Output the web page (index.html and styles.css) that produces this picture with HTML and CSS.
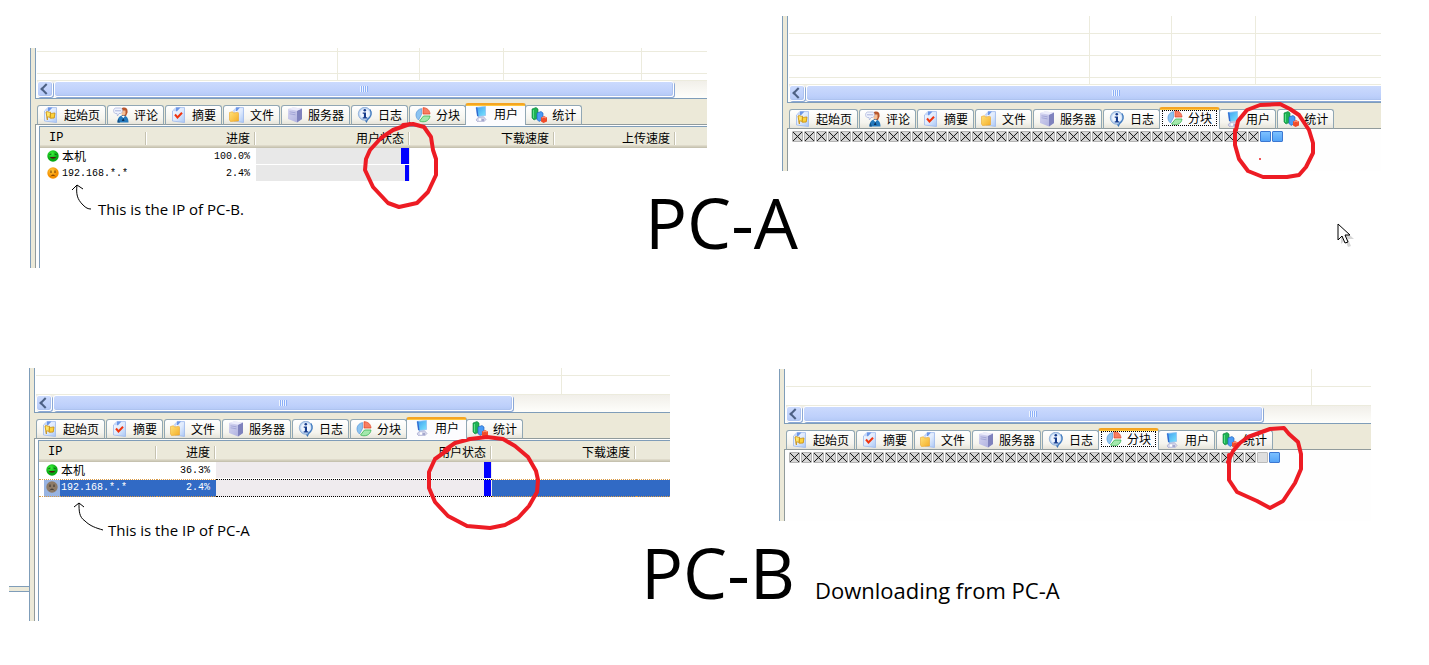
FILE: index.html
```html
<!DOCTYPE html>
<html lang="zh-CN">
<head>
<meta charset="utf-8">
<title>PC-A / PC-B</title>
<link rel="stylesheet" href="styles.css">
</head>
<body>
<svg class="sprite" aria-hidden="true">
  <defs>
    <linearGradient id="gPage" x1="0" y1="0" x2="1" y2="1"><stop offset="0" stop-color="#f4f8ff"/><stop offset=".5" stop-color="#e0ebfd"/><stop offset="1" stop-color="#a9c6f5"/></linearGradient>
    <linearGradient id="gGold" x1="0" y1="0" x2="1" y2="1"><stop offset="0" stop-color="#ffe27a"/><stop offset="1" stop-color="#f5ae28"/></linearGradient>
    <linearGradient id="gScreen" x1="0" y1="0" x2="1" y2="1"><stop offset="0" stop-color="#3d9cf0"/><stop offset="1" stop-color="#7be6fc"/></linearGradient>
    <linearGradient id="gServer" x1="0" y1="0" x2="1" y2="1"><stop offset="0" stop-color="#d8d8f2"/><stop offset="1" stop-color="#a9abdc"/></linearGradient>
    <radialGradient id="gInfo"><stop offset="0" stop-color="#fff"/><stop offset=".65" stop-color="#e9f2ff"/><stop offset="1" stop-color="#9fbfe6"/></radialGradient>
    <radialGradient id="gGreen" cx=".4" cy=".3"><stop offset="0" stop-color="#3cf53c"/><stop offset="1" stop-color="#06a811"/></radialGradient>
    <radialGradient id="gOrange" cx=".4" cy=".3"><stop offset="0" stop-color="#ffc93c"/><stop offset="1" stop-color="#f59000"/></radialGradient>
  </defs>
  <symbol id="page" viewBox="0 0 16 16"><path d="M5 .6h8.500v14.900L1.500 14V4z" fill="url(#gPage)" stroke="#9db9ec" stroke-width=".8"/><path d="M1.500 4L5 .6v3.600z" fill="#c3d5f8"/><path d="M5 .6h4.500L6 4.200H5z" fill="#6d96e6"/></symbol>
  <symbol id="start" viewBox="0 0 16 16"><use href="#page"/><path d="M3 5c2-1.200 2.800 1 4.500.2l-.3 5c-1.400.6-1.800-.9-3-.2l.2 3z" fill="#ffe668" stroke="#c99114" stroke-width=".9"/><path d="M7.500 6.200c1.500.6 2.500-.3 4.500-.1l-.8 4.900c-1.600-.2-2.200.4-4 .2z" fill="#fcd23a" stroke="#c99114" stroke-width=".9"/></symbol>
  <symbol id="comment" viewBox="0 0 16 16"><path d="M9 1c4-1.500 6 1 5.500 4.500L13 9H9z" fill="#b8562c"/><path d="M8.500 3.500h4V7l-2 2-2-1.500z" fill="#f5bf95"/><path d="M4.500 15.500c0-4.500 2-7 5.500-7s5.500 2.500 5.500 7z" fill="#2379bd"/><path d="M4.500 15.500c0-1.500.2-2.800.8-4l1.700 4z" fill="#124f86"/><path d="M8.500 9l1.800 2L12 9z" fill="#fff"/><path d="M10.200 11l-1.400 3h2.800z" fill="#0c2f58"/><path d="M2.500 1h5c2.500 0 2.500 5 0 5.500H6L4.500 9 4 6.500H2.500C0 6 0 1.500 2.500 1z" fill="#f0f3fd" stroke="#a3afd8" stroke-width=".7"/><path d="M2.500 3.800h5" stroke="#5e72bd" stroke-dasharray="1 1"/></symbol>
  <symbol id="summary" viewBox="0 0 16 16"><use href="#page"/><path d="M4 7.500l2.500 3 4.500-4.700" fill="none" stroke="#f0340e" stroke-width="2"/></symbol>
  <symbol id="file" viewBox="0 0 16 16"><path d="M7 .6h7.500v14.900L5 14V4z" fill="url(#gPage)" stroke="#9db9ec" stroke-width=".8"/><path d="M3.500 4L7 .6V4z" fill="#c3d5f8"/><path d="M7 .6h4L8 4H7z" fill="#6d96e6"/><path d="M.5 5.500l3-.8 1 1.300 4-.6c.8 0 1 .3 1 1V14L1.500 14.500l-1-1.500z" fill="url(#gGold)" stroke="#eba52a" stroke-width=".6"/></symbol>
  <symbol id="server" viewBox="0 0 16 16"><path d="M1 2l5-1.500 9 1V12l-5 3.500L1 12z" fill="url(#gServer)"/><path d="M10 3.700l5-2.200V12l-5 3.500z" fill="#7f82bd"/><path d="M1 2l5-1.500 9 1-5 2.200z" fill="#ececfb"/><path d="M2.500 4.800l6 1M2.500 6.800l6 1" stroke="#9b9dd2" stroke-width=".8"/></symbol>
  <symbol id="log" viewBox="0 0 16 16"><path d="M7 12l2.500 4 2.500-5z" fill="#3570b5"/><circle cx="7.800" cy="6.800" r="6.500" fill="url(#gInfo)" stroke="#8aabd6" stroke-width=".8"/><path d="M13 2.500c2.300 3.500 1 7.500-3 10.300" fill="none" stroke="#3d78bd" stroke-width="1.300"/><circle cx="7.800" cy="3.300" r="1.300" fill="#153b8c"/><path d="M5.700 5.500H9v4.700h1.200v1.200H5.700v-1.200h1.200V6.700H5.700z" fill="#153b8c"/></symbol>
  <symbol id="blocks" viewBox="0 0 16 16"><path d="M6.500 1.500v6l-3 5.500C-.5 10 0 3 6.500 1.500z" fill="#8cc3f0" stroke="#4a8fd6" stroke-width=".6"/><path d="M8 .7c4 0 6.700 2.300 7 6.300L8 7z" fill="#f77d63" stroke="#e0411f" stroke-width=".7"/><path d="M8.500 9H15c-.5 5-6 7-10.500 5z" fill="#a3e8ac" stroke="#3bb457" stroke-width=".8"/></symbol>
  <symbol id="user" viewBox="0 0 16 16"><path d="M3 1.500L12.500 .5v9L5 10.500z" fill="url(#gScreen)" stroke="#8fc0f2" stroke-width=".8"/><path d="M3 1.500l1.300-.2L5.500 10.500 4 10z" fill="#2f69cf"/><path d="M5 11.500l5.500-.8 2.500 2.800L10.500 16H5l-2-2z" fill="#d3d5ea" stroke="#9a9dc8" stroke-width=".6"/><circle cx="7" cy="13.500" r="1.200" fill="#fff"/><path d="M8.500 14h2.500" stroke="#777bb0"/></symbol>
  <symbol id="stats" viewBox="0 0 16 16"><path d="M1 2l4-1.500L7 2v9l-4 2-2-2z" fill="#1fb255" stroke="#0b8238" stroke-width=".6"/><path d="M2.500 3v8" stroke="#5ce08a"/><path d="M6 6l4-1.500L12 6v6l-4 2.500-2-2z" fill="#4a9bf5" stroke="#1559b8" stroke-width=".6"/><path d="M10 10.500l3-1.500 3 1.500v4L12.500 16 10 14.500z" fill="#f04c2a"/><path d="M11 11l2-1 2 1" stroke="#ff9c84" fill="none"/></symbol>
  <symbol id="happy" viewBox="0 0 12 12"><circle cx="6" cy="6" r="5.700" fill="url(#gGreen)"/><path d="M2.500 4.500l2-.5M7.500 4l2 .5" stroke="#0b5a0e"/><path d="M3 7h6c-.5 2.300-5.500 2.300-6 0z" fill="#4b1a10"/></symbol>
  <symbol id="sad" viewBox="0 0 12 12"><circle cx="6" cy="6" r="5.700" fill="url(#gOrange)"/><path d="M4 3.500v2.500M8 3.500v2.500M4 9.300c.8-1.600 3.200-1.600 4 0" stroke="#6a3400" fill="none"/></symbol>
  <symbol id="dim" viewBox="0 0 12 12"><circle cx="6" cy="6" r="5.700" fill="#8d7b67"/><path d="M4 3.500v2.500M8 3.500v2.500M4 9.300c.8-1.600 3.200-1.600 4 0" stroke="#33302c" fill="none"/></symbol>
</svg>

<main class="board">
  <section class="scene scene-a">
    <div class="window users-window">
      <div class="sash"></div>
      <div class="content">
        <div class="upper">
          <div class="lines from-3 tall-33"><i class="w-301"></i><i class="w-82"></i><i class="w-84"></i><i class="w-138"></i></div>
          <div class="scroll"><button class="arrow" type="button" aria-label="向左滚动"></button><div class="thumb thumb-a"><i class="grip"></i></div></div>
        </div>
        <nav class="tabs">
          <button type="button"><svg><use href="#start"/></svg>起始页</button>
          <button type="button"><svg><use href="#comment"/></svg>评论</button>
          <button type="button"><svg><use href="#summary"/></svg>摘要</button>
          <button type="button"><svg><use href="#file"/></svg>文件</button>
          <button type="button"><svg><use href="#server"/></svg>服务器</button>
          <button type="button"><svg><use href="#log"/></svg>日志</button>
          <button type="button"><svg><use href="#blocks"/></svg>分块</button>
          <button type="button" class="active"><svg><use href="#user"/></svg>用户</button>
          <button type="button"><svg><use href="#stats"/></svg>统计</button>
        </nav>
        <div class="lower lower-a">
          <div class="inset">
            <table class="peers">
              <colgroup><col class="w-107"><col class="w-109"><col class="w-154"><col class="w-145"><col class="w-121"><col></colgroup>
              <thead><tr><th class="first">IP</th><th>进度</th><th>用户状态</th><th>下载速度</th><th>上传速度</th><th class="rest"></th></tr></thead>
              <tbody>
                <tr><td class="peer"><svg><use href="#happy"/></svg>本机</td><td class="num">100.0%</td><td class="bar"><i class="chunk chunk-8"></i></td><td></td><td></td><td></td></tr>
                <tr><td class="peer ip"><svg><use href="#sad"/></svg>192.168.*.*</td><td class="num">2.4%</td><td class="bar"><i class="chunk chunk-4"></i></td><td></td><td></td><td></td></tr>
              </tbody>
            </table>
            <p class="note"><svg class="pointer" width="22" height="30" viewBox="0 0 22 30"><path d="M1 7l5-5 6 4M6 2c-1 9 0 14 6 20 3 3 5 4 8 4"/></svg>This is the IP of PC-B.</p>
          </div>
        </div>
      </div>
      <svg class="ring ring-a1" width="90" height="100" viewBox="355 115 90 100"><path d="M403 125L413 124 424 127 431 137 433 150 436 159V175L428 192 417 203 399 207 388 203 373 187 365 170 366 159 370 150 381 138 393 130 410 124"/></svg>
    </div>

    <div class="window pieces-window">
      <div class="sash"></div>
      <div class="content">
        <div class="upper">
          <div class="lines from-17 tall-69"><i class="w-301"></i><i class="w-82"></i><i class="w-84"></i></div>
          <div class="scroll"><button class="arrow" type="button" aria-label="向左滚动"></button><div class="thumb thumb-open"><i class="grip"></i></div></div>
        </div>
        <nav class="tabs">
          <button type="button"><svg><use href="#start"/></svg>起始页</button>
          <button type="button"><svg><use href="#comment"/></svg>评论</button>
          <button type="button"><svg><use href="#summary"/></svg>摘要</button>
          <button type="button"><svg><use href="#file"/></svg>文件</button>
          <button type="button"><svg><use href="#server"/></svg>服务器</button>
          <button type="button"><svg><use href="#log"/></svg>日志</button>
          <button type="button" class="active focused"><svg><use href="#blocks"/></svg>分块</button>
          <button type="button"><svg><use href="#user"/></svg>用户</button>
          <button type="button"><svg><use href="#stats"/></svg>统计</button>
        </nav>
        <div class="lower pieces pieces-a">
          <i></i><i></i><i></i><i></i><i></i><i></i><i></i><i></i><i></i><i></i><i></i><i></i><i></i><i></i><i></i><i></i><i></i><i></i><i></i><i></i><i></i><i></i><i></i><i></i><i></i><i></i><i></i><i></i><i></i><i></i><i></i><i></i><i></i><i></i><i></i><i></i><i></i><i></i><i></i><i class="busy"></i><i class="busy"></i>
        </div>
      </div>
      <svg class="ring ring-a2" width="100" height="90" viewBox="1225 95 100 90"><path d="M1236 130L1238 121 1247 110 1260 105 1280 104 1290 109 1299 115 1309 130 1313 143V153L1306 167 1299 175 1287 177H1263L1248 171 1239 159 1235 145V130"/><circle class="speck" cx="1260" cy="159" r="1"/></svg>
    </div>

    <h1 class="title">PC-A</h1>
    <svg class="cursor" width="20" height="26" viewBox="0 0 20 26"><path class="shade" d="M4 4v17l4-4 3 7 3-1-3-7h6z"/><path class="face" d="M1 1v16l4-4 3 7 3-1-3-7h5z"/></svg>
  </section>

  <section class="scene scene-b">
    <div class="window users-window">
      <div class="stub"><i></i></div>
      <div class="sash"></div>
      <div class="content">
        <div class="upper">
          <div class="lines from-7 tall-27"><i class="w-526"></i></div>
          <div class="scroll"><button class="arrow" type="button" aria-label="向左滚动"></button><div class="thumb thumb-b"><i class="grip"></i></div></div>
        </div>
        <nav class="tabs">
          <button type="button"><svg><use href="#start"/></svg>起始页</button>
          <button type="button"><svg><use href="#summary"/></svg>摘要</button>
          <button type="button"><svg><use href="#file"/></svg>文件</button>
          <button type="button"><svg><use href="#server"/></svg>服务器</button>
          <button type="button"><svg><use href="#log"/></svg>日志</button>
          <button type="button"><svg><use href="#blocks"/></svg>分块</button>
          <button type="button" class="active"><svg><use href="#user"/></svg>用户</button>
          <button type="button"><svg><use href="#stats"/></svg>统计</button>
        </nav>
        <div class="lower lower-b">
          <div class="inset">
            <table class="peers">
              <colgroup><col class="w-118"><col class="w-59"><col class="w-276"><col class="w-144"><col></colgroup>
              <thead><tr><th class="first">IP</th><th>进度</th><th>用户状态</th><th>下载速度</th><th class="rest"></th></tr></thead>
              <tbody>
                <tr><td class="peer"><svg><use href="#happy"/></svg>本机</td><td class="num">36.3%</td><td class="bar warm"><i class="chunk chunk-7"></i></td><td></td><td></td></tr>
                <tr class="selected"><td class="peer ip"><svg><use href="#dim"/></svg>192.168.*.*</td><td class="num">2.4%</td><td class="bar warm"><i class="chunk chunk-7"></i></td><td></td><td></td></tr>
              </tbody>
            </table>
            <p class="note note-b"><svg class="pointer" width="32" height="34" viewBox="0 0 32 34"><path d="M1 7l5-4 5 4M6 3c0 8 0 14 6 18 5 5 11 7 18 9"/></svg>This is the IP of PC-A</p>
          </div>
        </div>
      </div>
      <svg class="ring ring-b1" width="124" height="104" viewBox="422 432 124 104"><path d="M445 450L455 443 470 439 487 437 503 439 515 446 528 457 536 471 538 480 537 492 529 506 518 518 505 525 490 528 467 526 448 516 435 502 429 488V472L435 459 449 449"/></svg>
    </div>

    <div class="window pieces-window">
      <div class="sash"></div>
      <div class="content">
        <div class="upper">
          <div class="lines from-17 tall-37"><i class="w-526"></i></div>
          <div class="scroll"><button class="arrow" type="button" aria-label="向左滚动"></button><div class="thumb thumb-b"><i class="grip"></i></div></div>
        </div>
        <nav class="tabs">
          <button type="button"><svg><use href="#start"/></svg>起始页</button>
          <button type="button"><svg><use href="#summary"/></svg>摘要</button>
          <button type="button"><svg><use href="#file"/></svg>文件</button>
          <button type="button"><svg><use href="#server"/></svg>服务器</button>
          <button type="button"><svg><use href="#log"/></svg>日志</button>
          <button type="button" class="active focused"><svg><use href="#blocks"/></svg>分块</button>
          <button type="button"><svg><use href="#user"/></svg>用户</button>
          <button type="button"><svg><use href="#stats"/></svg>统计</button>
        </nav>
        <div class="lower pieces pieces-b">
          <i></i><i></i><i></i><i></i><i></i><i></i><i></i><i></i><i></i><i></i><i></i><i></i><i></i><i></i><i></i><i></i><i></i><i></i><i></i><i></i><i></i><i></i><i></i><i></i><i></i><i></i><i></i><i></i><i></i><i></i><i></i><i></i><i></i><i></i><i></i><i></i><i></i><i></i><i></i><i class="empty"></i><i class="busy"></i>
        </div>
      </div>
      <svg class="ring ring-b2" width="90" height="96" viewBox="1220 420 90 96"><path d="M1228 462L1233 451 1240 443 1248 437 1270 429 1284 428 1289 434 1298 442 1301 454V469L1295 483 1283 501 1270 508 1257 501 1237 492 1229 480V455"/></svg>
    </div>

    <h1 class="title">PC-B <small>Downloading from PC-A</small></h1>
  </section>
</main>
</body>
</html>
```

FILE: styles.css
```css
:root {
  --blue: #7f9db9;
  --beige: #ece9d8;
  --rule: #ecebdd;
  --tab-line: #919b9c;
}

* { box-sizing: border-box; }

body {
  margin: 0;
  background: #fff;
  color: #000;
  font: 12px/16px "Noto Sans CJK SC", sans-serif;
}

.sprite { position: absolute; width: 0; height: 0; }

.board { padding: 16px 0; }

.scene {
  position: relative;
  display: grid;
  align-items: start;
}
.scene-a { grid-template-columns: 30px minmax(0, 677fr) 75px minmax(0, 599fr) 48px; }
.scene-b {
  grid-template-columns: 9px minmax(0, 661fr) 109px minmax(0, 592fr) 58px;
  margin-top: 100px;
}

.window { position: relative; display: flex; grid-row: 1; }
.users-window { grid-column: 2; }
.pieces-window { grid-column: 4; }
.scene-a .users-window { margin-top: 32px; }
.scene-b .pieces-window { margin-top: 1px; }

.sash { flex: none; width: 5px; border-left: 1px solid var(--blue); background: var(--beige); }
.stub { flex: none; width: 20px; padding-top: 218px; }
.stub i {
  display: block;
  height: 6px;
  border: solid var(--blue);
  border-width: 1px 0;
  background: var(--beige);
}
.content { flex: 1; min-width: 0; }

/* list area above the tabs */
.upper { border: solid var(--blue); border-width: 0 0 1px 1px; padding-left: 1px; }
.lines {
  display: flex;
  border-bottom: 1px solid var(--rule);
  background: linear-gradient(var(--rule) 1px, transparent 1px) 0 0 / 100% 22px;
}
.lines i { flex: none; border-right: 1px solid var(--rule); }
.from-3 { background-position-y: 3px; }
.from-7 { background-position-y: 7px; }
.from-17 { background-position-y: 17px; }
.tall-27 { height: 27px; }
.tall-33 { height: 33px; }
.tall-37 { height: 37px; }
.tall-69 { height: 69px; }

.w-59 { width: 59px; }
.w-82 { width: 82px; }
.w-84 { width: 84px; }
.w-107 { width: 107px; }
.w-109 { width: 109px; }
.w-118 { width: 118px; }
.w-121 { width: 121px; }
.w-138 { width: 138px; }
.w-144 { width: 144px; }
.w-145 { width: 145px; }
.w-154 { width: 154px; }
.w-276 { width: 276px; }
.w-301 { width: 301px; }
.w-526 { width: 526px; }

.scroll {
  display: flex;
  gap: 1px;
  height: 17px;
  padding-bottom: 1px;
  background: linear-gradient(#f1efe9, #fefefb);
}
.arrow, .thumb {
  border: 1px solid #fff;
  border-radius: 3px;
  background: linear-gradient(#cbdafd, #bed0fb 70%, #b3c9f6);
  box-shadow: inset -1px -1px #aec3f0, 1px 1px #8ba8d6;
}
.arrow { display: grid; place-items: center; flex: none; width: 16px; padding: 0; }
.arrow::before {
  content: "";
  width: 6px;
  height: 6px;
  margin-left: 2px;
  border: solid #4d6185;
  border-width: 0 0 2px 2px;
  transform: rotate(45deg);
}
.thumb { display: grid; place-items: center; }
.thumb-a { width: 620px; }
.thumb-b { width: 460px; }
.thumb-open { flex: 1; border-right: 0; border-radius: 3px 0 0 3px; padding-left: 43px; box-shadow: inset 0 -1px #aec3f0, 0 1px #8ba8d6; }
.grip { width: 8px; height: 6px; background: repeating-linear-gradient(90deg, #eef4fe 0 1px, #8cb0f8 1px 2px); }

/* tab strip */
.tabs {
  display: flex;
  align-items: flex-end;
  gap: 1px;
  height: 26px;
  padding-left: 2px;
  background: linear-gradient(var(--tab-line), var(--tab-line)) 0 100% / 100% 1px no-repeat var(--beige);
}
.tabs button {
  display: flex;
  align-items: center;
  gap: 5px;
  flex: none;
  height: 20px;
  padding: 0 5px;
  border: 1px solid #91a7b4;
  border-bottom-color: var(--tab-line);
  border-radius: 3px 3px 0 0;
  background: linear-gradient(#fff, #f5f4ee 70%, #e6e4da);
  color: inherit;
  font: inherit;
  white-space: nowrap;
}
.tabs svg { width: 16px; height: 16px; }
.tabs .active {
  z-index: 1;
  height: 22px;
  margin: 0 -2px;
  padding: 0 7px 3px;
  border-top: 2px solid #f5a522;
  border-bottom: 0;
  background: linear-gradient(#ffc73c 1px, #fcfcfe 1px);
}
.tabs .focused { outline: 1px dotted #000; outline-offset: -4px; }

/* pane below the tabs */
.lower { border-left: 1px solid var(--tab-line); background: #fefefe; }
.lower-a, .lower-b { padding: 1px 0 0 3px; }
.lower-a { height: 143px; }
.lower-b { height: 182px; }
.inset { height: 100%; border: solid var(--blue); border-width: 1px 0 0 1px; background: #fff; }

.peers { width: 100%; border-collapse: collapse; table-layout: fixed; }
.peers th {
  height: 21px;
  padding: 0 6px 0 0;
  background:
    linear-gradient(#c5c2b0, #c5c2b0) calc(100% - 1px) 5px / 1px 13px no-repeat,
    linear-gradient(#fff, #fff) 100% 5px / 1px 13px no-repeat,
    linear-gradient(#ebe9da 18px, #dedaca 18px 19px, #d2cebc 19px 20px, #c6c2b0 20px);
  font-weight: normal;
  line-height: 18px;
  text-align: right;
  white-space: nowrap;
}
.peers .first { padding-left: 9px; font: 12px/20px "Liberation Mono", monospace; text-align: left; }
.peers .rest { background: linear-gradient(#ebe9da 18px, #dedaca 18px 19px, #d2cebc 19px 20px, #c6c2b0 20px); }
.peers td { height: 17px; padding: 0; line-height: 15px; white-space: nowrap; vertical-align: top; }
.peers .peer { padding-left: 7px; }
.peer svg { width: 12px; height: 12px; margin-right: 3px; vertical-align: -1px; }
.peers .ip svg { vertical-align: -3px; }
.peers .num, .peers .ip { font: 10px/17px "Liberation Mono", monospace; }
.peers .num { padding-right: 6px; text-align: right; }
.peers .bar { padding-right: 1px; background: linear-gradient(#e8e8e8 16px, #fff 16px); }
.peers .warm { background: linear-gradient(#efebee 16px, #fff 16px); }
.chunk { display: block; height: 16px; margin-left: auto; background: #00f; }
.chunk-4 { width: 4px; }
.chunk-7 { width: 7px; }
.chunk-8 { width: 8px; }

.selected td {
  border: dotted #d99a45;
  border-width: 1px 0;
  background: #316ac5;
  color: #fff;
}
.peers .selected .num, .peers .selected .ip { line-height: 15px; }
.selected .peer { background: linear-gradient(90deg, #fff 5px, #98b4e2 5px 21px, #316ac5 21px); }
.selected .bar { border-color: #000; background: #efebee; }

/* handwritten remarks */
.note {
  display: flex;
  gap: 5px;
  margin: 0;
  padding: 1px 0 0 31px;
  font: 15px/52px "Open Sans", sans-serif;
  height: 52px;
}
.note-b { gap: 3px; padding-left: 34px; padding-top: 3px; line-height: 60px; }
.pointer { fill: none; stroke: #000; stroke-width: 1; }

/* piece map */
.pieces { display: flex; flex-wrap: wrap; align-content: flex-start; gap: 1px; padding: 2px 0 0 4px; }
.pieces-a { height: 42px; }
.pieces-b { height: 71px; }
.pieces i {
  width: 11px;
  height: 11px;
  border: 1px solid #b4b4b4;
  border-radius: 1px;
  background:
    linear-gradient(45deg, transparent 44%, #222 50%, transparent 56%),
    linear-gradient(-45deg, transparent 44%, #222 50%, transparent 56%),
    #d8d8d8;
}
.pieces .busy { border-color: #3c78d2; background: linear-gradient(#7cc0ff, #55a4f7); }
.pieces .empty { border-color: #bbb; background: #dedede; }

.ring { position: absolute; fill: none; stroke: #ed1c24; stroke-width: 4; stroke-linejoin: round; stroke-linecap: round; }
.speck { fill: #ed1c24; stroke: none; }
.ring-a1 { left: 325px; top: 67px; }
.ring-a2 { left: 443px; top: 79px; }
.ring-b1 { left: 413px; top: 64px; }
.ring-b2 { left: 441px; top: 51px; }

.title {
  z-index: 1;
  grid-row: 1;
  grid-column: 1 / -1;
  place-self: end start;
  display: flex;
  align-items: baseline;
  gap: 20px;
  margin: 0 0 0 645px;
  font: 70px/92px "Open Sans", sans-serif;
}
.scene-b .title { margin: 0 0 -15px 641px; }
.title small { font-size: 22px; }

.cursor { position: absolute; right: 72px; top: 207px; }
.shade { fill: #bbb; opacity: .6; }
.face { fill: #fff; stroke: #000; }
```
